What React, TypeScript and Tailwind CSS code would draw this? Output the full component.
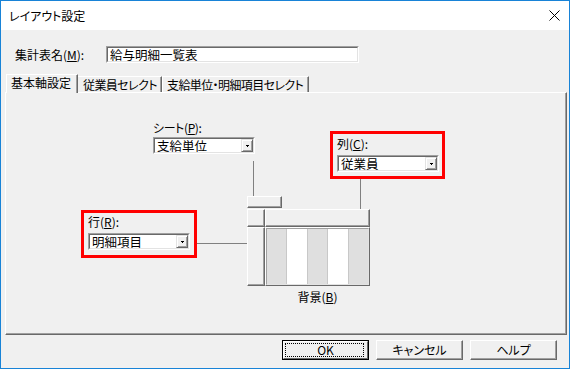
import React from "react";

const raised =
  "border border-t-white border-l-white border-r-[#696969] border-b-[#696969] shadow-[inset_-1px_-1px_0_#a0a0a0] bg-[#f0f0f0]";

function Mn({ c }: { c: string }) {
  return <span className="underline underline-offset-[1px]">{c}</span>;
}

function Combo({ text }: { text: string }) {
  return (
    <div className="w-[102px] h-[17px] border border-t-[#a0a0a0] border-l-[#a0a0a0] border-b-white border-r-white">
      <div className="h-full border border-t-[#696969] border-l-[#696969] border-b-[#e3e3e3] border-r-[#e3e3e3] bg-white flex items-center">
        <span className="flex-1 pl-[2px] text-[12.5px] leading-[13px] whitespace-nowrap">{text}</span>
        <div className="w-[12px] h-full border border-t-[#e3e3e3] border-l-[#e3e3e3] border-b-[#696969] border-r-[#696969] shadow-[inset_1px_1px_0_#fff,inset_-1px_-1px_0_#a0a0a0] bg-[#f0f0f0] flex items-center justify-center">
          <svg width="3" height="2" viewBox="0 0 3 2" shapeRendering="crispEdges">
            <rect x="0" y="0" width="3" height="1" fill="#000" />
            <rect x="1" y="1" width="1" height="1" fill="#000" />
          </svg>
        </div>
      </div>
    </div>
  );
}

function Button({ label, isDefault }: { label: string; isDefault?: boolean }) {
  if (isDefault) {
    return (
      <div className="relative w-[87px] h-[20px] border border-black bg-[#f0f0f0] flex items-center justify-center">
        <div className="absolute inset-0 border border-t-white border-l-white border-r-[#696969] border-b-[#696969]" />
        <div className="absolute left-[2px] top-[2px] right-[4px] bottom-[2px] border border-dotted border-black" />
        <span className="relative text-[12px] leading-[14px]">{label}</span>
      </div>
    );
  }
  return (
    <div className={"w-[87px] h-[20px] flex items-center justify-center " + raised}>
      <span className="text-[12px] leading-[14px]">{label}</span>
    </div>
  );
}

export default function App() {
  return (
    <div className="w-[570px] h-[369px] border border-[#1883d7] bg-[#f0f0f0] flex flex-col text-black text-[12px] [font-family:'Noto_Sans_CJK_JP','Noto_Sans',sans-serif] [font-feature-settings:'palt'] overflow-hidden">
      {/* Title bar */}
      <div className="h-[29px] shrink-0 bg-white flex items-center pl-[8px] pr-[9px]">
        <span className="flex-1 text-[12px] leading-[16px]">レイアウト設定</span>
        <svg width="11" height="11" viewBox="0 0 11 11">
          <line x1="0.5" y1="0.5" x2="10.5" y2="10.5" stroke="#000" strokeWidth="1" />
          <line x1="10.5" y1="0.5" x2="0.5" y2="10.5" stroke="#000" strokeWidth="1" />
        </svg>
      </div>

      {/* Body */}
      <div className="flex-1 flex flex-col">
        {/* Name row */}
        <div className="mt-[16px] h-[17px] flex items-center pl-[14px]">
          <span className="w-[91px] leading-[15px]">
            集計表名(<Mn c="M" />):
          </span>
          <div className="w-[253px] h-[17px] border border-t-[#a0a0a0] border-l-[#a0a0a0] border-b-white border-r-white">
            <div className="h-full border border-t-[#696969] border-l-[#696969] border-b-[#e3e3e3] border-r-[#e3e3e3] bg-white flex items-center">
              <span className="pl-[2px] text-[12.5px] leading-[13px] whitespace-nowrap">給与明細一覧表</span>
            </div>
          </div>
        </div>

        {/* Tabs */}
        <div className="mt-[11px] h-[18px] flex items-end pl-[5px] tracking-[-0.6px]">
          <div className="relative z-10 -mb-px w-[72px] h-[19px] bg-[#f0f0f0] border-l border-t border-r border-l-white border-t-white border-r-[#696969] shadow-[inset_-1px_0_0_#a0a0a0] pl-[4px] leading-[15px] whitespace-nowrap tracking-normal">
            基本軸設定
          </div>
          <div className="w-[84px] h-[16px] border-t border-r border-t-white border-r-[#696969] shadow-[inset_-1px_0_0_#a0a0a0] pl-[5px] leading-[15px] whitespace-nowrap">
            従業員セレクト
          </div>
          <div className="w-[147px] h-[16px] border-t border-r border-l border-l-white border-t-white border-r-[#696969] shadow-[inset_-1px_0_0_#a0a0a0] pl-[4px] leading-[15px] whitespace-nowrap">
            支給単位・明細項目セレクト
          </div>
        </div>

        {/* Panel */}
        <div className="relative ml-[4px] w-[562px] h-[243px] border border-t-white border-l-white border-r-[#696969] border-b-[#696969] shadow-[inset_-1px_-1px_0_#a0a0a0]">
          {/* Sheet */}
          <div className="absolute left-[147px] top-[25px] flex flex-col">
            <div className="h-[19px] leading-[19px] tracking-[-0.4px]">
              シート(<Mn c="P" />):
            </div>
            <Combo text="支給単位" />
          </div>
          <div className="absolute left-[247px] top-[68px] w-px h-[35px] bg-[#808080]" />

          {/* small header box */}
          <div className={"absolute left-[241px] top-[103px] w-[35px] h-[12px] " + raised} />

          {/* Grid */}
          <div className="absolute left-[241px] top-[116px] grid grid-cols-[18px_105px] grid-rows-[18px_59px]">
            <div className={raised} />
            <div className={raised} />
            <div className={raised} />
            <div className="border border-t-white border-l-white border-r-[#696969] border-b-[#696969]">
              <div className="h-full border border-t-[#a0a0a0] border-l-[#a0a0a0] border-r-[#e3e3e3] border-b-[#e3e3e3] flex">
                <div className="flex-1 bg-[#dfdfdf] border-r border-r-[#c8c8c8]" />
                <div className="flex-1 bg-white" />
                <div className="flex-1 bg-[#dfdfdf] border-x border-x-[#c8c8c8]" />
                <div className="flex-1 bg-white" />
                <div className="flex-1 bg-[#dfdfdf] border-l border-l-[#c8c8c8]" />
              </div>
            </div>
          </div>
          <div className="absolute left-[259px] top-[196px] w-[105px] h-[15px] leading-[15px] text-center">
            背景(<Mn c="B" />)
          </div>

          {/* Column box */}
          <div className="absolute left-[324px] top-[38px] w-[115px] h-[48px] border-[3px] border-[#ff0000] pl-[4px] pt-[1px] flex flex-col">
            <div className="h-[18px] leading-[18px]">
              列(<Mn c="C" />):
            </div>
            <div className="mt-[2px]">
              <Combo text="従業員" />
            </div>
          </div>
          <div className="absolute left-[354px] top-[86px] w-px h-[30px] bg-[#808080]" />

          {/* Row box */}
          <div className="absolute left-[75px] top-[117px] w-[116px] h-[48px] border-[3px] border-[#ff0000] pl-[4px] flex flex-col">
            <div className="h-[18px] leading-[18px]">
              行(<Mn c="R" />):
            </div>
            <div className="mt-[2px]">
              <Combo text="明細項目" />
            </div>
          </div>
          <div className="absolute left-[191px] top-[150px] w-[50px] h-px bg-[#808080]" />
        </div>

        {/* Buttons */}
        <div className="mt-[5px] flex justify-end gap-[7px] pr-[12px]">
          <Button label="OK" isDefault />
          <Button label="キャンセル" />
          <Button label="ヘルプ" />
        </div>
      </div>
    </div>
  );
}
